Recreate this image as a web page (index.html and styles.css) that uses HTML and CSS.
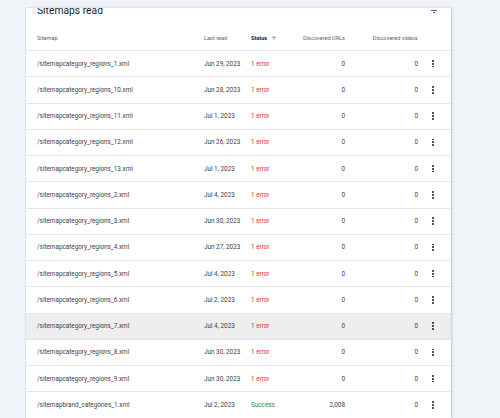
FILE: index.html
```html
<!DOCTYPE html>
<html lang="en">
<head>
    <meta charset="UTF-8">
    <meta name="viewport" content="width=device-width, initial-scale=1.0">
    <title>Sitemaps read</title>
    <link rel="stylesheet" href="styles.css">
</head>
<body>
    <div class="card">
        <div class="card-title">
            <h2>Sitemaps read</h2>
            <svg class="filter-icon" width="10" height="10" viewBox="0 0 10 10">
                <rect x="0" y="0" width="10" height="1" fill="#5f6368"/>
                <rect x="2" y="3" width="6" height="1" fill="#5f6368"/>
                <rect x="4" y="5" width="2" height="1" fill="#5f6368"/>
            </svg>
        </div>

        <div class="row head">
            <div>Sitemap</div>
            <div>Last read</div>
            <div class="sorted">Status
                <svg width="6" height="6" viewBox="0 0 24 24"><path d="M4 12l1.41 1.41L11 7.83V20h2V7.83l5.58 5.59L20 12l-8-8-8 8z" fill="#5f6368"/></svg>
            </div>
            <div class="num">Discovered URLs</div>
            <div class="num">Discovered videos</div>
            <div></div>
        </div>

        <div class="row"><div>/sitemapcategory_regions_1.xml</div><div>Jun 29, 2023</div><div class="err">1 error</div><div class="num">0</div><div class="num">0</div><div class="more"><i></i><i></i><i></i></div></div>
        <div class="row"><div>/sitemapcategory_regions_10.xml</div><div>Jun 28, 2023</div><div class="err">1 error</div><div class="num">0</div><div class="num">0</div><div class="more"><i></i><i></i><i></i></div></div>
        <div class="row"><div>/sitemapcategory_regions_11.xml</div><div>Jul 1, 2023</div><div class="err">1 error</div><div class="num">0</div><div class="num">0</div><div class="more"><i></i><i></i><i></i></div></div>
        <div class="row"><div>/sitemapcategory_regions_12.xml</div><div>Jun 26, 2023</div><div class="err">1 error</div><div class="num">0</div><div class="num">0</div><div class="more"><i></i><i></i><i></i></div></div>
        <div class="row"><div>/sitemapcategory_regions_13.xml</div><div>Jul 1, 2023</div><div class="err">1 error</div><div class="num">0</div><div class="num">0</div><div class="more"><i></i><i></i><i></i></div></div>
        <div class="row"><div>/sitemapcategory_regions_2.xml</div><div>Jul 4, 2023</div><div class="err">1 error</div><div class="num">0</div><div class="num">0</div><div class="more"><i></i><i></i><i></i></div></div>
        <div class="row"><div>/sitemapcategory_regions_3.xml</div><div>Jun 30, 2023</div><div class="err">1 error</div><div class="num">0</div><div class="num">0</div><div class="more"><i></i><i></i><i></i></div></div>
        <div class="row"><div>/sitemapcategory_regions_4.xml</div><div>Jun 27, 2023</div><div class="err">1 error</div><div class="num">0</div><div class="num">0</div><div class="more"><i></i><i></i><i></i></div></div>
        <div class="row"><div>/sitemapcategory_regions_5.xml</div><div>Jul 4, 2023</div><div class="err">1 error</div><div class="num">0</div><div class="num">0</div><div class="more"><i></i><i></i><i></i></div></div>
        <div class="row"><div>/sitemapcategory_regions_6.xml</div><div>Jul 2, 2023</div><div class="err">1 error</div><div class="num">0</div><div class="num">0</div><div class="more"><i></i><i></i><i></i></div></div>
        <div class="row hover"><div>/sitemapcategory_regions_7.xml</div><div>Jul 4, 2023</div><div class="err">1 error</div><div class="num">0</div><div class="num">0</div><div class="more"><i></i><i></i><i></i></div></div>
        <div class="row"><div>/sitemapcategory_regions_8.xml</div><div>Jun 30, 2023</div><div class="err">1 error</div><div class="num">0</div><div class="num">0</div><div class="more"><i></i><i></i><i></i></div></div>
        <div class="row"><div>/sitemapcategory_regions_9.xml</div><div>Jun 30, 2023</div><div class="err">1 error</div><div class="num">0</div><div class="num">0</div><div class="more"><i></i><i></i><i></i></div></div>
        <div class="row"><div>/sitemapbrand_categories_1.xml</div><div>Jul 2, 2023</div><div class="ok">Success</div><div class="num">2,008</div><div class="num">0</div><div class="more"><i></i><i></i><i></i></div></div>
    </div>
</body>
</html>
```

FILE: styles.css
```css
body {
    font-family: Roboto, "Liberation Sans", Arial, sans-serif;
    background-color: #f0f4f9;
    color: #3c4043;
    margin: 0;
    padding: 8px 0 0 25px;
}
.card {
    width: 425px;
    background-color: #fff;
    border-left: 1px solid #e1e4e9;
    box-shadow: 1px 0 2px rgba(60, 64, 67, 0.25);
    overflow: hidden;
}
.card-title {
    display: flex;
    justify-content: space-between;
    align-items: flex-start;
    height: 20px;
    margin-top: -3px;
    padding: 0 12px 0 11px;
}
.card-title h2 {
    margin: 0;
    font-size: 10.3px;
    font-weight: 400;
    line-height: 12px;
    color: #202124;
}
.filter-icon { margin-top: 2px; }
.row {
    display: grid;
    grid-template-columns: 167px 47px 39px 55px 73px 30px;
    align-items: center;
    height: 25.25px;
    padding-left: 11px;
    border-bottom: 1px solid #e6e6e6;
    font-size: 6.35px;
    white-space: nowrap;
}
.row.head {
    height: 25px;
    font-size: 5.6px;
    color: #5f6368;
}
.row.hover { background-color: #eeeeee; }
.sorted {
    display: flex;
    align-items: center;
    gap: 4px;
    font-weight: 700;
    color: #202124;
}
.num { text-align: right; }
.err { color: #d93025; }
.ok { color: #1e8e3e; }
.more {
    display: flex;
    flex-direction: column;
    align-items: center;
    gap: 1px;
}
.more i {
    width: 1.8px;
    height: 1.8px;
    border-radius: 50%;
    background-color: #202124;
}
```
